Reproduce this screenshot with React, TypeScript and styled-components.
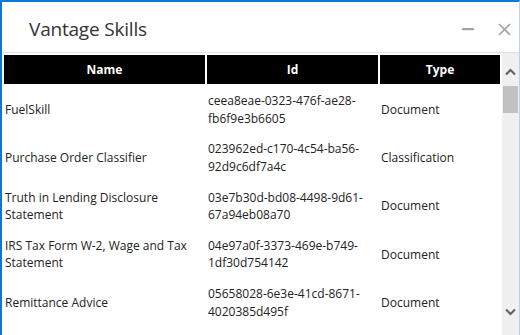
import React from "react";
import styled, { createGlobalStyle } from "styled-components";

const Global = createGlobalStyle`
  html, body { margin: 0; padding: 0; background: #ffffff; }
  body { font-family: "Open Sans", "Noto Sans", sans-serif; }
`;

const Window = styled.div`
  width: 520px;
  height: 335px;
  box-sizing: border-box;
  border-top: 2px solid #0a78d8;
  border-left: 2px solid #0a78d8;
  border-right: 1px solid #b9d3ee;
  display: flex;
  flex-direction: column;
  overflow: hidden;
  background: #fff;
`;

const TitleBar = styled.div`
  height: 50px;
  box-sizing: border-box;
  display: flex;
  align-items: center;
  padding: 4px 8px 0 27px;
  flex-shrink: 0;
`;

const Title = styled.h1`
  flex: 1;
  margin: 0;
  font-family: "Open Sans", sans-serif;
  font-weight: 400;
  font-size: 19px;
  color: #333;
  letter-spacing: -0.2px;
`;

const IconButton = styled.button`
  border: 0;
  background: transparent;
  padding: 0;
  width: 14px;
  height: 14px;
  display: flex;
  align-items: center;
  justify-content: center;
  margin-left: 22px;
  color: #9aa4a8;
`;

const Body = styled.div`
  flex: 1;
  display: flex;
  min-height: 0;
  border-top: 1px solid #dde3ea;
`;

const TableArea = styled.div`
  flex: 1;
  overflow: hidden;
`;

const Table = styled.table`
  border-collapse: separate;
  border-spacing: 2px;
  table-layout: fixed;
  width: 100%;
  font-family: "Open Sans", sans-serif;
  font-size: 12px;
  color: #222;
`;

const Th = styled.th<{ $w: number }>`
  width: ${(p) => p.$w}px;
  height: 29px;
  padding: 0;
  background: #000;
  color: #fff;
  font-weight: 700;
  font-size: 12px;
  text-align: center;
`;

const Td = styled.td`
  height: 45.25px;
  padding: 1px 1px 0;
  line-height: 17.5px;
  vertical-align: middle;
  text-align: left;
`;

const Scrollbar = styled.div`
  width: 17px;
  background: #f0f0f0;
  display: flex;
  flex-direction: column;
  align-items: center;
  padding: 5px 0 9px;
`;

const Arrow = styled.div`
  height: 28px;
  width: 17px;
  display: flex;
  align-items: center;
  justify-content: center;
  color: #606060;
`;

const Thumb = styled.div`
  width: 15px;
  height: 27px;
  background: #c1c1c1;
`;

const Track = styled.div`
  flex: 1;
`;

const rows = [
  { name: "FuelSkill", id: "ceea8eae-0323-476f-ae28-fb6f9e3b6605", type: "Document" },
  { name: "Purchase Order Classifier", id: "023962ed-c170-4c54-ba56-92d9c6df7a4c", type: "Classification" },
  { name: "Truth in Lending Disclosure Statement", id: "03e7b30d-bd08-4498-9d61-67a94eb08a70", type: "Document" },
  { name: "IRS Tax Form W-2, Wage and Tax Statement", id: "04e97a0f-3373-469e-b749-1df30d754142", type: "Document" },
  { name: "Remittance Advice", id: "05658028-6e3e-41cd-8671-4020385d495f", type: "Document" },
];

export default function App() {
  return (
    <>
      <Global />
      <Window>
        <TitleBar>
          <Title>Vantage Skills</Title>
          <IconButton aria-label="minimize">
            <svg width="12" height="12" viewBox="0 0 12 12">
              <rect x="0" y="5" width="12" height="2.2" fill="currentColor" />
            </svg>
          </IconButton>
          <IconButton aria-label="close">
            <svg width="13" height="13" viewBox="0 0 13 13">
              <path d="M1 1L12 12M12 1L1 12" stroke="currentColor" strokeWidth="1.6" />
            </svg>
          </IconButton>
        </TitleBar>
        <Body>
          <TableArea>
            <Table>
              <thead>
                <tr>
                  <Th $w={201}>Name</Th>
                  <Th $w={171}>Id</Th>
                  <Th $w={120}>Type</Th>
                </tr>
              </thead>
              <tbody>
                {rows.map((r) => (
                  <tr key={r.id}>
                    <Td>{r.name}</Td>
                    <Td>{r.id}</Td>
                    <Td>{r.type}</Td>
                  </tr>
                ))}
              </tbody>
            </Table>
          </TableArea>
          <Scrollbar>
            <Arrow>
              <svg width="11" height="8" viewBox="0 0 11 8">
                <path d="M1 6.5L5.5 2L10 6.5" stroke="currentColor" strokeWidth="2" fill="none" />
              </svg>
            </Arrow>
            <Thumb />
            <Track />
            <Arrow>
              <svg width="11" height="8" viewBox="0 0 11 8">
                <path d="M1 1.5L5.5 6L10 1.5" stroke="currentColor" strokeWidth="2" fill="none" />
              </svg>
            </Arrow>
          </Scrollbar>
        </Body>
      </Window>
    </>
  );
}
